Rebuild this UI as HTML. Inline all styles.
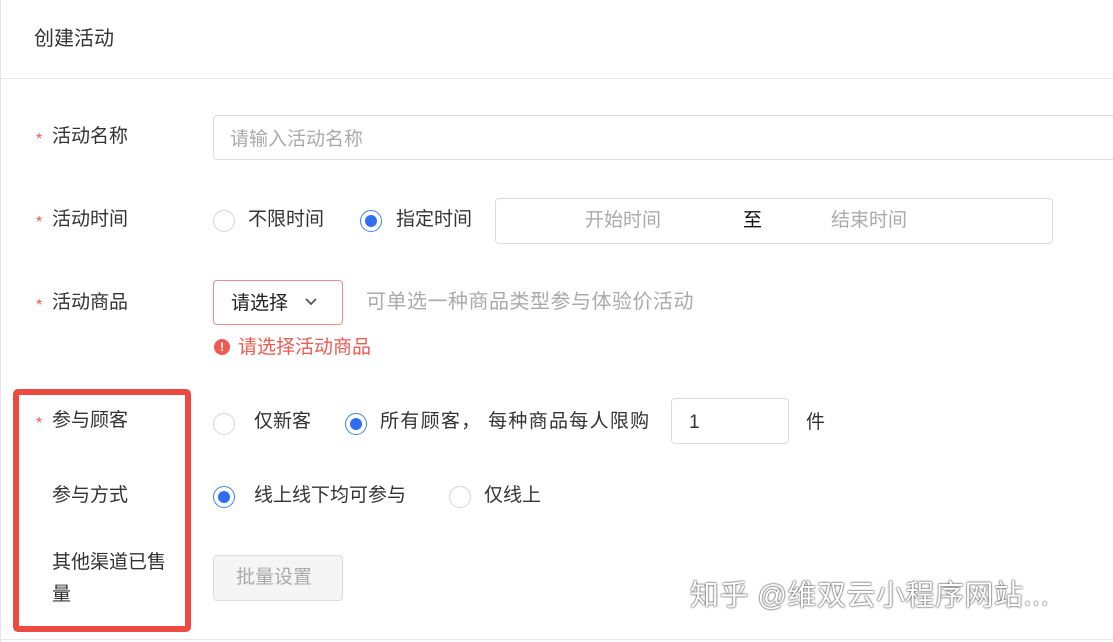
<!DOCTYPE html>
<html><head><meta charset="utf-8"><style>
*{margin:0;padding:0;box-sizing:border-box}
body{width:1113px;height:642px;background:#fff;position:relative;overflow:hidden;font-family:"Liberation Sans","Noto Sans CJK SC",sans-serif;color:#333;font-size:19px}
.a{position:absolute;white-space:nowrap;line-height:24px}
.b{position:absolute;border:1px solid #dcdcdc;border-radius:4px}
.star{position:absolute;color:#f0584f;font-size:16px;line-height:24px}
.r{position:absolute;width:22px;height:22px;border:1px solid #d5d5d5;border-radius:50%}
.r.on{border:1px solid #3b7ff0}
.r.on:after{content:"";position:absolute;left:4px;top:4px;width:12px;height:12px;border-radius:50%;background:#2f6ef2}
.g{color:#aaa}
</style></head><body>
<div style="position:absolute;left:0;top:0;width:1px;height:642px;background:#e5e5e5"></div>
<div style="position:absolute;left:0;top:78px;width:1113px;height:1px;background:#e8e8e8"></div>
<div style="position:absolute;left:0;top:639px;width:1113px;height:1px;background:#e8e8e8"></div>
<div class="a" style="left:34px;top:27px;font-size:20px">创建活动</div>

<span class="star" style="left:36px;top:128px">*</span><div class="a" style="left:52px;top:125px">活动名称</div>
<div class="b" style="left:213px;top:115px;width:920px;height:45px"></div>
<div class="a g" style="left:230px;top:128px">请输入活动名称</div>

<span class="star" style="left:36px;top:211px">*</span><div class="a" style="left:52px;top:208px">活动时间</div>
<div class="r" style="left:213px;top:210px"></div>
<div class="a" style="left:248px;top:208px">不限时间</div>
<div class="r on" style="left:360px;top:210px"></div>
<div class="a" style="left:396px;top:208px">指定时间</div>
<div class="b" style="left:495px;top:198px;width:558px;height:46px"></div>
<div class="a g" style="left:585px;top:209px">开始时间</div>
<div class="a" style="left:743px;top:209px;color:#111">至</div>
<div class="a g" style="left:831px;top:209px">结束时间</div>

<span class="star" style="left:36px;top:294px">*</span><div class="a" style="left:52px;top:291px">活动商品</div>
<div class="b" style="left:213px;top:280px;width:130px;height:45px;border-color:#f08a84"></div>
<div class="a" style="left:231px;top:292px;color:#222">请选择</div>
<svg style="position:absolute;left:304px;top:297px" width="14" height="10"><path d="M2 2L7 7L12 2" fill="none" stroke="#555" stroke-width="1.8"/></svg>
<div class="a g" style="left:366px;top:290px;font-size:20px;letter-spacing:0.5px">可单选一种商品类型参与体验价活动</div>
<div style="position:absolute;left:214px;top:339px;width:16px;height:16px;border-radius:50%;background:#ef5a52;color:#fff;font-size:12px;line-height:16px;text-align:center;font-weight:bold">!</div>
<div class="a" style="left:238px;top:336px;color:#ef5a52">请选择活动商品</div>

<span class="star" style="left:36px;top:412px">*</span><div class="a" style="left:52px;top:409px">参与顾客</div>
<div class="r" style="left:213px;top:413px"></div>
<div class="a" style="left:254px;top:410px">仅新客</div>
<div class="r on" style="left:345px;top:413px"></div>
<div class="a" style="left:380px;top:410px;letter-spacing:1.3px">所有顾客， 每种商品每人限购</div>
<div class="b" style="left:671px;top:398px;width:118px;height:46px"></div>
<div class="a" style="left:689px;top:411px">1</div>
<div class="a" style="left:806px;top:411px">件</div>

<div class="a" style="left:52px;top:484px">参与方式</div>
<div class="r on" style="left:213px;top:486px"></div>
<div class="a" style="left:254px;top:484px">线上线下均可参与</div>
<div class="r" style="left:449px;top:486px"></div>
<div class="a" style="left:484px;top:484px">仅线上</div>

<div class="a" style="left:52px;top:547px;line-height:32px;white-space:normal;width:130px">其他渠道已售<br>量</div>
<div class="b" style="left:213px;top:555px;width:130px;height:46px;background:#f5f5f5"></div>
<div class="a g" style="left:236px;top:566px">批量设置</div>

<div style="position:absolute;left:13px;top:389px;width:178px;height:243px;border:6px solid #ee4a42;border-radius:5px"></div>
<div class="a" style="left:690px;top:580px;font-size:29px;line-height:32px;letter-spacing:0.5px;color:#fff;text-shadow:0 0 2px #444,0 0 1px #222">知乎 @维双云小程序网站...</div>
</body></html>
